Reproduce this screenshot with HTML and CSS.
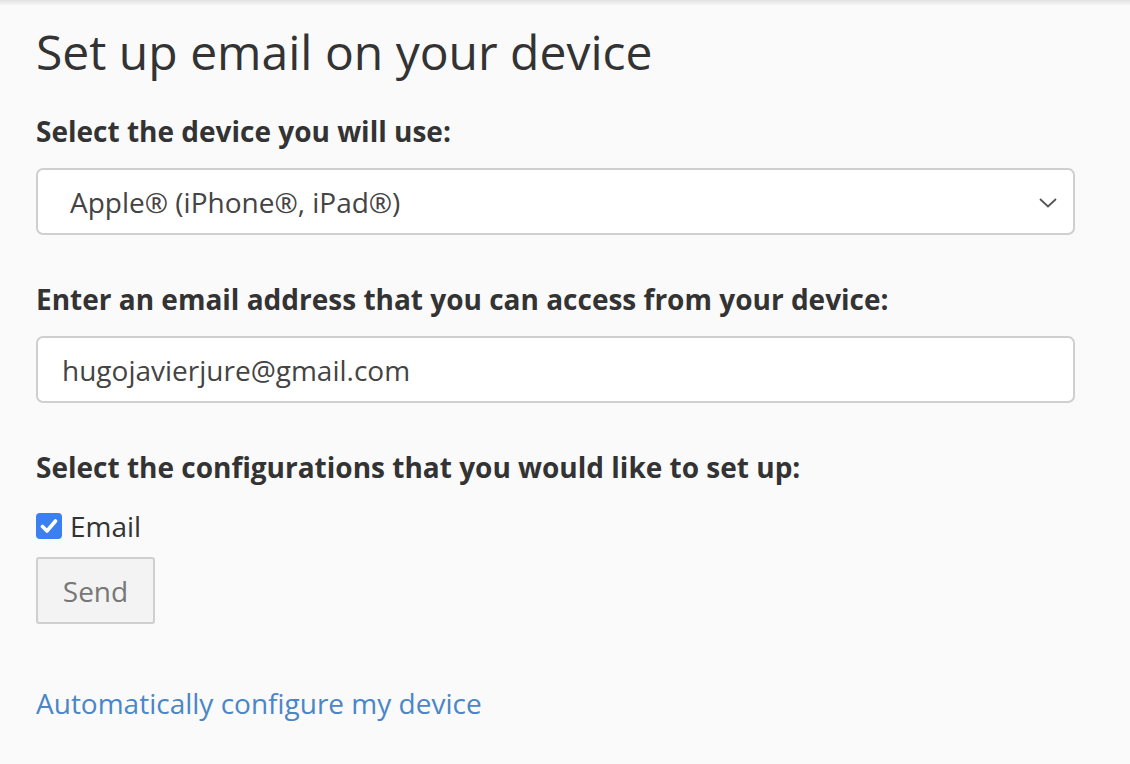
FILE: index.html
```html
<!DOCTYPE html>
<html>
<head>
<meta charset="utf-8">
<link rel="stylesheet" href="styles.css">
</head>
<body>
<div class="topshade"></div>
<main class="page">
  <h1 class="title">Set up email on your device</h1>
  <div class="field">
    <label class="label">Select the device you will use:</label>
    <div class="select">
      <span class="select-text">Apple® (iPhone®, iPad®)</span>
      <svg class="chev" width="18" height="10" viewBox="0 0 18 10"><path d="M1 1 L9 8.5 L17 1" fill="none" stroke="#555" stroke-width="1.8"/></svg>
    </div>
  </div>
  <div class="field">
    <label class="label">Enter an email address that you can access from your device:</label>
    <div class="input">hugojavierjure@gmail.com</div>
  </div>
  <div class="field field-last">
    <label class="label">Select the configurations that you would like to set up:</label>
    <div class="check-row">
      <span class="checkbox"><svg width="18" height="16" viewBox="0 0 18 16"><path d="M2.5 8.5 L7 13 L15.5 3" fill="none" stroke="#fff" stroke-width="3.6" stroke-linecap="round" stroke-linejoin="round"/></svg></span>
      <span class="check-label">Email</span>
    </div>
    <div class="button">Send</div>
  </div>
  <a class="link" href="#">Automatically configure my device</a>
</main>
</body>
</html>
```
FILE: styles.css
```css
html, body {
  margin: 0;
  padding: 0;
  background: #fafafa;
}
body {
  font-family: "Open Sans", "Liberation Sans", sans-serif;
  color: #333;
  width: 1130px;
  height: 764px;
  overflow: hidden;
}
.topshade {
  height: 6px;
  background: linear-gradient(#e2e2e2, #fafafa);
}
.page {
  padding: 0 55px 0 36px;
}
.title {
  font-size: 48px;
  font-weight: 400;
  line-height: 56px;
  margin: 18px 0 0 0;
  color: #333;
}
.label {
  display: block;
  font-size: 28px;
  font-weight: 700;
  line-height: 34px;
  margin-top: 34px;
  color: #333;
}
.select {
  margin-top: 20px;
  height: 63px;
  border: 2px solid #cfcfcf;
  border-radius: 7px;
  background: #fff;
  display: flex;
  align-items: center;
  justify-content: space-between;
  padding: 0 16px 0 32px;
}
.select-text {
  font-size: 28px;
  color: #444;
}
.chev {
  display: block;
  margin-top: 2px;
}
.input {
  margin-top: 20px;
  height: 63px;
  border: 2px solid #cfcfcf;
  border-radius: 7px;
  background: #fff;
  display: flex;
  align-items: center;
  padding: 0 24px;
  font-size: 28px;
  color: #444;
}
.field + .field .label {
  margin-top: 47px;
}
.check-row {
  display: flex;
  align-items: center;
  gap: 8px;
  margin-top: 27px;
}
.checkbox {
  width: 26px;
  height: 26px;
  border-radius: 4px;
  background: #3b7ff0;
  display: flex;
  align-items: center;
  justify-content: center;
}
.checkbox svg { display: block; }
.check-label {
  font-size: 28px;
  line-height: 30px;
  color: #333;
}
.button {
  margin-top: 16px;
  width: 115px;
  height: 63px;
  border: 2px solid #cfcfcf;
  border-radius: 3px;
  background: #f3f3f3;
  color: #777;
  font-size: 28px;
  display: flex;
  align-items: center;
  justify-content: center;
}
.link {
  display: block;
  margin-top: 59px;
  font-size: 28px;
  line-height: 40px;
  color: #4a86c8;
  text-decoration: none;
}
```
